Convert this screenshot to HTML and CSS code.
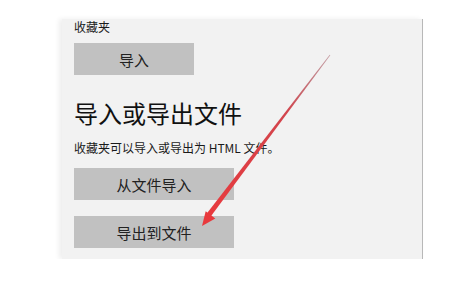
FILE: index.html
```html
<!DOCTYPE html>
<html lang="zh-CN">
<head>
    <meta charset="utf-8">
    <title>收藏夹设置</title>
    <link rel="stylesheet" href="styles.css">
</head>

<body>

    <div class="panel">
        <div class="label">收藏夹</div>
        <button class="button button-small">导入</button>

        <h1>导入或导出文件</h1>
        <p class="desc">收藏夹可以导入或导出为 HTML 文件。</p>

        <button class="button">从文件导入</button>
        <button class="button">导出到文件</button>
    </div>

    <svg class="arrow" width="459" height="281" viewBox="0 0 459 281">
        <defs>
            <linearGradient id="shaft" x1="330" y1="55" x2="206" y2="216" gradientUnits="userSpaceOnUse">
                <stop offset="0" stop-color="#9a4a55" stop-opacity="0.5"/>
                <stop offset="0.35" stop-color="#d2454d"/>
                <stop offset="1" stop-color="#e8393d"/>
            </linearGradient>
        </defs>
        <polygon points="330.3,55.2 329.7,54.8 206,214.5 210,217.5" fill="url(#shaft)"/>
        <polygon points="202,226 205.7,211.2 215.3,218.4" fill="#e8393d"/>
    </svg>

</body>
</html>
```

FILE: styles.css
```css
body {
    margin: 0;
    background-color: #fff;
    font-family: "Noto Sans CJK SC", "Noto Sans", sans-serif;
    color: #1a1a1a;
}

.panel {
    width: 361px;
    height: 240px;
    margin: 19px 0 0 62px;
    padding-left: 12px;
    box-sizing: border-box;
    background-color: #f2f2f2;
    border-right: 1px solid #b8b8b8;
    box-shadow: -3px 0 5px rgba(0, 0, 0, 0.07);
    overflow: hidden;
}

.label {
    font-size: 12px;
    line-height: 15px;
}

.button {
    display: block;
    width: 160px;
    height: 32px;
    padding: 0;
    border: none;
    background-color: #c1c1c1;
    color: #222;
    font-family: inherit;
    font-size: 15px;
    margin-top: 16px;
}

.button-small {
    width: 120px;
    margin-top: 9px;
}

h1 {
    font-size: 24px;
    font-weight: normal;
    line-height: 32px;
    margin: 22px 0 0;
    color: #111;
}

.desc {
    font-size: 12px;
    line-height: 16px;
    margin: 11px 0 0;
}

.desc + .button {
    margin-top: 12px;
}

.arrow {
    position: absolute;
    left: 0;
    top: 0;
    pointer-events: none;
}
```
